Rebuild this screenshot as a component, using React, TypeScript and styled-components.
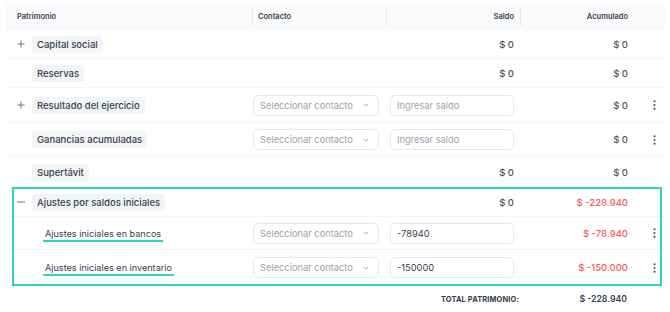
import React from "react";
import styled, { createGlobalStyle, css } from "styled-components";

const Global = createGlobalStyle`
  html, body { margin: 0; padding: 0; background: #ffffff; }
  body { font-family: Inter, "Noto Sans", "Liberation Sans", sans-serif; color: #374151; }
  * { box-sizing: border-box; }
`;

const COLS = "246px 134px 134px 114px 31px";

const Page = styled.div`
  padding: 3px 5px 0 6px;
  width: 670px;
`;

const Table = styled.div`
  width: 659px;
  display: flex;
  flex-direction: column;
`;

const HeaderRow = styled.div`
  display: grid;
  grid-template-columns: ${COLS};
  height: 27px;
  background: #f9fafb;
  align-items: center;
`;

const HeaderCell = styled.div<{ $align?: "left" | "right"; $divider?: boolean; $pl?: number; $pr?: number }>`
  position: relative;
  height: 100%;
  display: flex;
  align-items: center;
  justify-content: ${(p) => (p.$align === "right" ? "flex-end" : "flex-start")};
  padding-left: ${(p) => p.$pl ?? 0}px;
  padding-right: ${(p) => p.$pr ?? 0}px;
  font-size: 7.5px;
  font-weight: 600;
  color: #374151;
  ${(p) =>
    p.$divider &&
    css`
      &::before {
        content: "";
        position: absolute;
        left: 0;
        top: 5px;
        bottom: 4px;
        width: 1px;
        background: #e5e7eb;
      }
    `}
`;

const Row = styled.div<{ $h: number; $last?: boolean }>`
  display: grid;
  grid-template-columns: ${COLS};
  height: ${(p) => p.$h}px;
  align-items: center;
  border-bottom: 1px solid ${(p) => (p.$last ? "transparent" : "#f3f4f6")};
`;

const NameCell = styled.div<{ $child?: boolean }>`
  display: flex;
  align-items: center;
  padding-left: ${(p) => (p.$child ? 37 : 11)}px;
  height: 100%;
`;

const IconSlot = styled.div`
  width: 15px;
  height: 10px;
  display: flex;
  align-items: center;
  color: #6b7280;
`;

const Chip = styled.span`
  display: inline-flex;
  align-items: center;
  height: 17px;
  padding: 0 5px;
  border-radius: 4px;
  background: #f3f4f6;
  font-size: 9.5px;
  font-weight: 500;
  color: #374151;
  white-space: nowrap;
`;

const ChildLabel = styled.span`
  display: inline-flex;
  align-items: center;
  padding: 0 2px 1px 2px;
  border-bottom: 2px solid #2dd4bf;
  font-size: 9.1px;
  font-weight: 400;
  color: #374151;
  white-space: nowrap;
  margin-top: 3px;
`;

const Cell = styled.div<{ $align?: "left" | "right" | "center"; $pl?: number; $pr?: number }>`
  display: flex;
  align-items: center;
  height: 100%;
  justify-content: ${(p) =>
    p.$align === "right" ? "flex-end" : p.$align === "center" ? "center" : "flex-start"};
  padding-left: ${(p) => p.$pl ?? 0}px;
  padding-right: ${(p) => p.$pr ?? 0}px;
`;

const Amount = styled.span<{ $neg?: boolean }>`
  font-size: 9.5px;
  font-weight: 500;
  color: ${(p) => (p.$neg ? "#f25c5c" : "#4b5563")};
  white-space: nowrap;
`;

const Select = styled.div`
  width: 126px;
  height: 21px;
  border: 1px solid #e5e7eb;
  border-radius: 5px;
  display: flex;
  align-items: center;
  justify-content: space-between;
  padding: 0 9px 0 6px;
  font-size: 9.3px;
  color: #9ca3af;
  background: #fff;
`;

const Input = styled.div<{ $filled?: boolean }>`
  width: 125px;
  height: 21px;
  border: 1px solid #e5e7eb;
  border-radius: 5px;
  display: flex;
  align-items: center;
  padding: 0 6px;
  font-size: 9.3px;
  color: ${(p) => (p.$filled ? "#374151" : "#9ca3af")};
  background: #fff;
`;

const Group = styled.div`
  position: relative;
  display: flex;
  flex-direction: column;
  &::after {
    content: "";
    position: absolute;
    left: 6px;
    right: 3px;
    top: -1px;
    bottom: 0;
    border: 2px solid #2dd4bf;
    pointer-events: none;
  }
`;

const TotalRow = styled.div`
  display: grid;
  grid-template-columns: ${COLS};
  height: 26px;
  align-items: center;
`;

const TotalLabel = styled.span`
  font-size: 7.5px;
  font-weight: 700;
  color: #374151;
  letter-spacing: 0.1px;
`;

const TotalAmount = styled.span`
  font-size: 8.7px;
  font-weight: 600;
  color: #374151;
`;

const Plus = () => (
  <svg width="8" height="8" viewBox="0 0 8 8">
    <path d="M4 0.5V7.5M0.5 4H7.5" stroke="#6b7280" strokeWidth="1" />
  </svg>
);

const Minus = () => (
  <svg width="8" height="8" viewBox="0 0 8 8">
    <path d="M0 4H8" stroke="#6b7280" strokeWidth="1" />
  </svg>
);

const Chevron = () => (
  <svg width="6" height="4" viewBox="0 0 6 4">
    <path d="M0.5 0.7L3 3.2L5.5 0.7" stroke="#9ca3af" strokeWidth="0.9" fill="none" />
  </svg>
);

const Kebab = () => (
  <svg width="3" height="10" viewBox="0 0 3 10">
    <circle cx="1.5" cy="1.3" r="1.1" fill="#4b5563" />
    <circle cx="1.5" cy="5" r="1.1" fill="#4b5563" />
    <circle cx="1.5" cy="8.7" r="1.1" fill="#4b5563" />
  </svg>
);

type RowData = {
  name: string;
  icon?: "plus" | "minus";
  child?: boolean;
  h: number;
  editable?: boolean;
  inputValue?: string;
  saldo?: string;
  acum: string;
  acumNeg?: boolean;
  last?: boolean;
};

const topRows: RowData[] = [
  { name: "Capital social", icon: "plus", h: 29, saldo: "$ 0", acum: "$ 0" },
  { name: "Reservas", h: 29, saldo: "$ 0", acum: "$ 0" },
  { name: "Resultado del ejercicio", icon: "plus", h: 35, editable: true, acum: "$ 0" },
  { name: "Ganancias acumuladas", h: 34, editable: true, acum: "$ 0" },
  { name: "Supertávit", h: 31, saldo: "$ 0", acum: "$ 0" },
];

const groupRows: RowData[] = [
  { name: "Ajustes por saldos iniciales", icon: "minus", h: 29, saldo: "$ 0", acum: "$ -228.940", acumNeg: true },
  { name: "Ajustes iniciales en bancos", child: true, h: 33, editable: true, inputValue: "-78940", acum: "$ -78.940", acumNeg: true },
  { name: "Ajustes iniciales en inventario", child: true, h: 36, editable: true, inputValue: "-150000", acum: "$ -150.000", acumNeg: true, last: true },
];

const DataRow = ({ r }: { r: RowData }) => (
  <Row $h={r.h} $last={r.last}>
    <NameCell $child={r.child}>
      {!r.child && (
        <IconSlot>{r.icon === "plus" ? <Plus /> : r.icon === "minus" ? <Minus /> : null}</IconSlot>
      )}
      {r.child ? <ChildLabel>{r.name}</ChildLabel> : <Chip>{r.name}</Chip>}
    </NameCell>
    <Cell $pl={1}>
      {r.editable && (
        <Select>
          <span>Seleccionar contacto</span>
          <Chevron />
        </Select>
      )}
    </Cell>
    <Cell $align={r.editable ? "left" : "right"} $pl={r.editable ? 4 : 0} $pr={6}>
      {r.editable ? (
        <Input $filled={!!r.inputValue}>{r.inputValue ?? "Ingresar saldo"}</Input>
      ) : (
        <Amount>{r.saldo}</Amount>
      )}
    </Cell>
    <Cell $align="right" $pr={6}>
      <Amount $neg={r.acumNeg}>{r.acum}</Amount>
    </Cell>
    <Cell $align="right" $pr={9}>
      {r.editable && <Kebab />}
    </Cell>
  </Row>
);

export default function App() {
  return (
    <Page>
      <Global />
      <Table>
        <HeaderRow>
          <HeaderCell $pl={11}>Patrimonio</HeaderCell>
          <HeaderCell $divider $pl={6}>Contacto</HeaderCell>
          <HeaderCell $divider $align="right" $pr={6}>Saldo</HeaderCell>
          <HeaderCell $divider $align="right" $pr={6}>Acumulado</HeaderCell>
          <HeaderCell />
        </HeaderRow>
        {topRows.map((r) => (
          <DataRow key={r.name} r={r} />
        ))}
        <Group>
          {groupRows.map((r) => (
            <DataRow key={r.name} r={r} />
          ))}
        </Group>
        <TotalRow>
          <div />
          <div />
          <Cell $align="right" $pr={1}>
            <TotalLabel>TOTAL PATRIMONIO:</TotalLabel>
          </Cell>
          <Cell $align="right" $pr={7}>
            <TotalAmount>$ -228.940</TotalAmount>
          </Cell>
          <div />
        </TotalRow>
      </Table>
    </Page>
  );
}
